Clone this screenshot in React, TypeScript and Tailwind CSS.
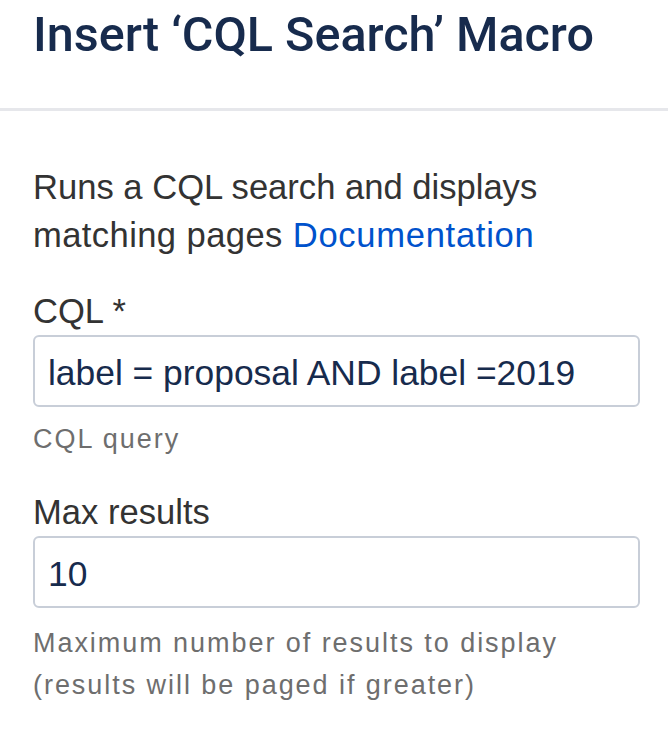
import { useState } from "react";

export default function App() {
  const [cql, setCql] = useState("label = proposal AND label =2019");
  const [max, setMax] = useState("10");

  return (
    <main className="min-h-screen bg-white font-['Liberation_Sans',Arial,sans-serif]">
      {/* Header */}
      <header className="h-[111px] pt-[5px] pl-[33px] border-b-[3px] border-[#e6e7eb]">
        <h1 className="font-['Roboto',sans-serif] font-medium text-[48.5px] leading-[60px] text-[#172b4d] whitespace-nowrap">
          Insert ‘CQL Search’ Macro
        </h1>
      </header>

      {/* Body */}
      <div className="pt-[52px] pl-[33px] pr-[28px]">
        <p className="text-[34.6px] leading-[48px] text-[#333333]">
          Runs a CQL search and displays
          <br />
          <span className="tracking-[0.4px]">matching pages </span>
          <a href="#" className="text-[#0052cc] tracking-[0.7px]">
            Documentation
          </a>
        </p>

        <label className="block mt-[28px] text-[34.6px] leading-[48px] text-[#333333]">CQL *</label>
        <input
          value={cql}
          onChange={(e) => setCql(e.target.value)}
          className="block w-full h-[72px] pt-1 px-[13px] border-2 border-[#c8ced8] rounded-[6px] text-[35.4px] text-[#172b4d] outline-none"
        />
        <p className="mt-[11px] text-[27px] leading-[42px] tracking-[1.95px] text-[#6e6e6e]">CQL query</p>

        <label className="block mt-[28px] text-[34.6px] leading-[48px] text-[#333333]">Max results</label>
        <input
          value={max}
          onChange={(e) => setMax(e.target.value)}
          className="block w-full h-[72px] pt-1 px-[13px] border-2 border-[#c8ced8] rounded-[6px] text-[35.4px] text-[#172b4d] outline-none"
        />
        <p className="mt-[14px] text-[27px] leading-[42px] tracking-[1.95px] text-[#6e6e6e]">
          Maximum number of results to display
          <br />
          (results will be paged if greater)
        </p>
      </div>
    </main>
  );
}
